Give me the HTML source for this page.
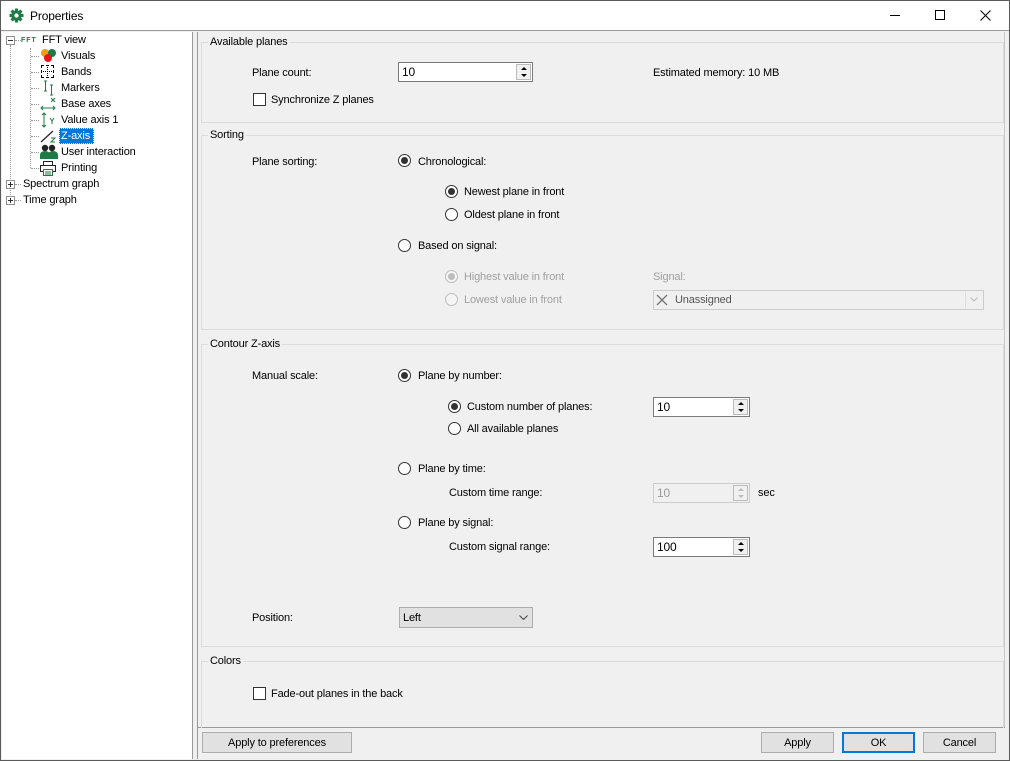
<!DOCTYPE html>
<html><head><meta charset="utf-8"><style>
*{box-sizing:border-box;margin:0;padding:0}
body{width:1010px;height:761px;position:relative;background:#f0f0f0;font-family:"Liberation Sans",sans-serif;font-size:11px;letter-spacing:-0.15px;color:#000;overflow:hidden}
.a{position:absolute}
.t{position:absolute;line-height:16px;white-space:nowrap}
.g{color:#a0a0a0}
.gb{position:absolute;border:1px solid #dcdcdc}
.gl{position:absolute;background:#f0f0f0;padding:0 2px;line-height:15px}
.r{position:absolute;width:13px;height:13px;border:1px solid #333;border-radius:50%;background:#fff}
.r.on::after{content:"";position:absolute;left:2px;top:2px;width:7px;height:7px;border-radius:50%;background:#333}
.r.dis{border-color:#bcbcbc;background:#f5f5f5}
.r.dis.on::after{background:#bcbcbc}
.cb{position:absolute;width:13px;height:13px;border:1px solid #333;background:#fff}
.sp{position:absolute;background:#fff;border:1px solid #7a7a7a;height:20px;padding-left:3px;line-height:18px;font-size:12px}
.sp .b{position:absolute;right:1px;top:1px;width:15px;height:16px;border:1px solid #bbb;background:#f0f0f0}
.sp .b::before{content:"";position:absolute;left:4px;top:2px;border:3px solid transparent;border-bottom:3px solid #000;border-top:0}
.sp .b::after{content:"";position:absolute;left:4px;top:9px;border:3px solid transparent;border-top:3px solid #000;border-bottom:0}
.sp.dis{border-color:#ccc;color:#999;background:#f0f0f0}
.sp.dis .b::before{border-bottom-color:#bbb}.sp.dis .b::after{border-top-color:#bbb}
.btn{position:absolute;height:21px;border:1px solid #adadad;background:#e1e1e1;text-align:center;line-height:20px}
.dl{position:absolute;border-top:1px dotted #999}
.dv{position:absolute;border-left:1px dotted #999}
</style></head><body>
<div class="a" style="left:0;top:0;width:1010px;height:761px;border:1px solid #5a5a5a"></div>
<div class="a" style="left:1px;top:1px;width:1008px;height:30px;background:#fff;border-bottom:1px solid #999"></div>
<svg class="a" style="left:9px;top:8px" width="15" height="15" viewBox="0 0 16 16"><g fill="#1e7a46"><circle cx="8" cy="8" r="5.5"/><rect x="6.3" y="0.5" width="3.4" height="15" rx="0.5"/><rect x="0.5" y="6.3" width="15" height="3.4" rx="0.5"/><rect x="6.3" y="0.5" width="3.4" height="15" rx="0.5" transform="rotate(45 8 8)"/><rect x="6.3" y="0.5" width="3.4" height="15" rx="0.5" transform="rotate(-45 8 8)"/></g><circle cx="8" cy="8" r="2.3" fill="#fff"/></svg>
<div class="t" style="left:30px;top:8px;font-size:12px">Properties</div>
<div class="a" style="left:890px;top:15px;width:10px;height:1px;background:#000"></div>
<div class="a" style="left:935px;top:10px;width:10px;height:10px;border:1px solid #000"></div>
<svg class="a" style="left:980px;top:10px" width="11" height="11"><path d="M0.5 0.5L10.5 10.5M10.5 0.5L0.5 10.5" stroke="#000" stroke-width="1"/></svg>

<div class="a" style="left:2px;top:32px;width:191px;height:727px;background:#fff;border-right:1px solid #999"></div>
<div class="a" style="left:197px;top:32px;width:1px;height:727px;background:#999"></div>
<div class="a" style="left:1004px;top:32px;width:1px;height:696px;background:#c8c8c8"></div>
<div class="a" style="left:197px;top:727px;width:808px;height:1px;background:#999"></div>

<div class="dv" style="left:10px;top:45px;height:160px"></div>
<div class="dv" style="left:30px;top:48px;height:120px"></div>
<div class="a" style="left:6px;top:36px;width:9px;height:9px;border:1px solid #919191;background:#fff"></div>
<div class="a" style="left:8px;top:40px;width:5px;height:1px;background:#333"></div>
<div class="dl" style="left:15px;top:40px;width:6px"></div>
<div class="t" style="left:21px;top:33px;font-size:7px;color:#1e7a46;font-weight:bold;letter-spacing:1px">FFT</div>
<div class="t" style="left:42px;top:32px">FFT view</div>

<div class="dl" style="left:31px;top:56px;width:8px"></div>
<div class="a" style="left:41px;top:49px;width:8px;height:8px;border-radius:50%;background:#f39c12"></div>
<div class="a" style="left:48px;top:49px;width:8px;height:8px;border-radius:50%;background:#1e7a46"></div>
<div class="a" style="left:44px;top:54px;width:8px;height:8px;border-radius:50%;background:#e8141e"></div>
<div class="t" style="left:61px;top:48px">Visuals</div>

<div class="dl" style="left:31px;top:72px;width:8px"></div>
<div class="a" style="left:41px;top:65px;width:13px;height:13px;border:1px dashed #000"></div>
<div class="a" style="left:47px;top:67px;width:1px;height:9px;border-left:1px dotted #000"></div>
<div class="a" style="left:43px;top:71px;width:9px;height:1px;border-top:1px dotted #000"></div>
<div class="t" style="left:61px;top:64px">Bands</div>

<div class="dl" style="left:31px;top:88px;width:8px"></div>
<svg class="a" style="left:42px;top:80px" width="14" height="16"><path d="M2 1h3M3.5 1v10M2 11h3M8 5h3M9.5 5v10M8 15h3" stroke="#1e7a46" fill="none"/></svg>
<div class="t" style="left:61px;top:80px">Markers</div>

<div class="dl" style="left:31px;top:104px;width:8px"></div>
<svg class="a" style="left:40px;top:96px" width="17" height="16"><path d="M1 12h14M3 10l-2 2 2 2M13 10l2 2-2 2" stroke="#1e7a46" fill="none"/><path d="M11 2l4 4M15 2l-4 4" stroke="#1e7a46"/></svg>
<div class="t" style="left:61px;top:96px">Base axes</div>

<div class="dl" style="left:31px;top:120px;width:8px"></div>
<svg class="a" style="left:40px;top:112px" width="17" height="16"><path d="M4 1v14M2 3l2-2 2 2M2 13l2 2 2-2" stroke="#1e7a46" fill="none"/><path d="M10 6l2 3 2-3M12 9v3" stroke="#1e7a46" fill="none"/></svg>
<div class="t" style="left:61px;top:112px">Value axis 1</div>

<div class="dl" style="left:31px;top:136px;width:8px"></div>
<svg class="a" style="left:40px;top:128px" width="18" height="16"><path d="M1 14L13 3" stroke="#222" stroke-width="1.2"/><path d="M11 10h4l-4 4h4" stroke="#1e7a46" fill="none"/></svg>
<div class="a" style="left:59px;top:128px;width:35px;height:16px;background:#0078d7;border:1px dotted #f0f0f0"></div>
<div class="t" style="left:61px;top:128px;color:#fff">Z-axis</div>

<div class="dl" style="left:31px;top:152px;width:8px"></div>
<svg class="a" style="left:40px;top:144px" width="18" height="15"><circle cx="5" cy="4" r="3.2" fill="#222"/><circle cx="12" cy="4" r="3.2" fill="#222"/><path d="M0 15v-4a5 4 0 0 1 10 0v4z" fill="#1e7a46"/><path d="M8 15v-4a5 4 0 0 1 10 0v4z" fill="#1e7a46"/></svg>
<div class="t" style="left:61px;top:144px">User interaction</div>

<div class="dl" style="left:31px;top:168px;width:8px"></div>
<svg class="a" style="left:40px;top:160px" width="16" height="16"><rect x="3.5" y="1.5" width="9" height="4" fill="#fff" stroke="#222"/><rect x="0.5" y="5.5" width="15" height="6" fill="#fff" stroke="#222"/><rect x="3.5" y="9.5" width="9" height="6" fill="#fff" stroke="#1e7a46"/><path d="M5 12h6M5 14h6" stroke="#1e7a46"/></svg>
<div class="t" style="left:61px;top:160px">Printing</div>

<div class="a" style="left:6px;top:180px;width:9px;height:9px;border:1px solid #919191;background:#fff"></div>
<div class="a" style="left:8px;top:184px;width:5px;height:1px;background:#333"></div>
<div class="a" style="left:10px;top:182px;width:1px;height:5px;background:#333"></div>
<div class="dl" style="left:15px;top:184px;width:6px"></div>
<div class="t" style="left:23px;top:176px">Spectrum graph</div>
<div class="a" style="left:6px;top:196px;width:9px;height:9px;border:1px solid #919191;background:#fff"></div>
<div class="a" style="left:8px;top:200px;width:5px;height:1px;background:#333"></div>
<div class="a" style="left:10px;top:198px;width:1px;height:5px;background:#333"></div>
<div class="dl" style="left:15px;top:200px;width:6px"></div>
<div class="t" style="left:23px;top:192px">Time graph</div>

<div class="gb" style="left:201px;top:42px;width:803px;height:81px"></div>
<div class="gl" style="left:208px;top:35px">Available planes</div>
<div class="gb" style="left:201px;top:135px;width:803px;height:195px"></div>
<div class="gl" style="left:208px;top:128px">Sorting</div>
<div class="gb" style="left:201px;top:344px;width:803px;height:303px"></div>
<div class="gl" style="left:208px;top:337px">Contour Z-axis</div>
<div class="gb" style="left:201px;top:661px;width:803px;height:80px"></div>
<div class="gl" style="left:208px;top:654px">Colors</div>
<div class="a" style="left:198px;top:728px;width:806px;height:31px;background:#f0f0f0"></div>

<div class="t" style="left:252px;top:65px">Plane count:</div>
<div class="sp" style="left:398px;top:62px;width:135px">10<div class="b"></div></div>
<div class="t" style="left:653px;top:65px">Estimated memory: 10 MB</div>
<div class="cb" style="left:253px;top:93px"></div>
<div class="t" style="left:271px;top:92px">Synchronize Z planes</div>

<div class="t" style="left:252px;top:154px">Plane sorting:</div>
<div class="r on" style="left:398px;top:154px"></div><div class="t" style="left:418px;top:154px">Chronological:</div>
<div class="r on" style="left:445px;top:185px"></div><div class="t" style="left:464px;top:184px">Newest plane in front</div>
<div class="r" style="left:445px;top:208px"></div><div class="t" style="left:464px;top:207px">Oldest plane in front</div>
<div class="r" style="left:398px;top:239px"></div><div class="t" style="left:418px;top:238px">Based on signal:</div>
<div class="r dis on" style="left:445px;top:270px"></div><div class="t g" style="left:464px;top:269px">Highest value in front</div>
<div class="r dis" style="left:445px;top:293px"></div><div class="t g" style="left:464px;top:292px">Lowest value in front</div>
<div class="t g" style="left:653px;top:269px">Signal:</div>
<div class="a" style="left:653px;top:290px;width:331px;height:20px;border:1px solid #ccc;background:#f0f0f0"></div>
<svg class="a" style="left:656px;top:294px" width="12" height="12"><path d="M1 1L11 11M11 1L1 11" stroke="#777" stroke-width="1.4"/></svg>
<div class="t" style="left:675px;top:292px;color:#555">Unassigned</div>
<div class="a" style="left:965px;top:292px;width:17px;height:16px;border-left:1px solid #ddd"></div>
<svg class="a" style="left:970px;top:297px" width="8" height="5"><path d="M0.5 0.5L4 4L7.5 0.5" stroke="#bbb" fill="none"/></svg>

<div class="t" style="left:252px;top:368px">Manual scale:</div>
<div class="r on" style="left:398px;top:369px"></div><div class="t" style="left:418px;top:368px">Plane by number:</div>
<div class="r on" style="left:448px;top:400px"></div><div class="t" style="left:467px;top:399px">Custom number of planes:</div>
<div class="sp" style="left:653px;top:397px;width:97px">10<div class="b"></div></div>
<div class="r" style="left:448px;top:422px"></div><div class="t" style="left:467px;top:421px">All available planes</div>
<div class="r" style="left:398px;top:462px"></div><div class="t" style="left:418px;top:461px">Plane by time:</div>
<div class="t" style="left:449px;top:485px">Custom time range:</div>
<div class="sp dis" style="left:653px;top:483px;width:97px">10<div class="b"></div></div>
<div class="t" style="left:758px;top:485px">sec</div>
<div class="r" style="left:398px;top:516px"></div><div class="t" style="left:418px;top:515px">Plane by signal:</div>
<div class="t" style="left:449px;top:539px">Custom signal range:</div>
<div class="sp" style="left:653px;top:537px;width:97px">100<div class="b"></div></div>
<div class="t" style="left:252px;top:610px">Position:</div>
<div class="a" style="left:399px;top:607px;width:134px;height:21px;border:1px solid #adadad;background:#e1e1e1"></div>
<div class="t" style="left:403px;top:610px">Left</div>
<svg class="a" style="left:519px;top:615px" width="9" height="5"><path d="M0.5 0.5L4.5 4.5L8.5 0.5" stroke="#444" fill="none"/></svg>

<div class="cb" style="left:253px;top:687px"></div>
<div class="t" style="left:271px;top:686px">Fade-out planes in the back</div>

<div class="btn" style="left:202px;top:732px;width:150px">Apply to preferences</div>
<div class="btn" style="left:761px;top:732px;width:73px">Apply</div>
<div class="btn" style="left:842px;top:732px;width:73px;border:2px solid #0078d7;line-height:18px">OK</div>
<div class="btn" style="left:923px;top:732px;width:73px">Cancel</div>
</body></html>
